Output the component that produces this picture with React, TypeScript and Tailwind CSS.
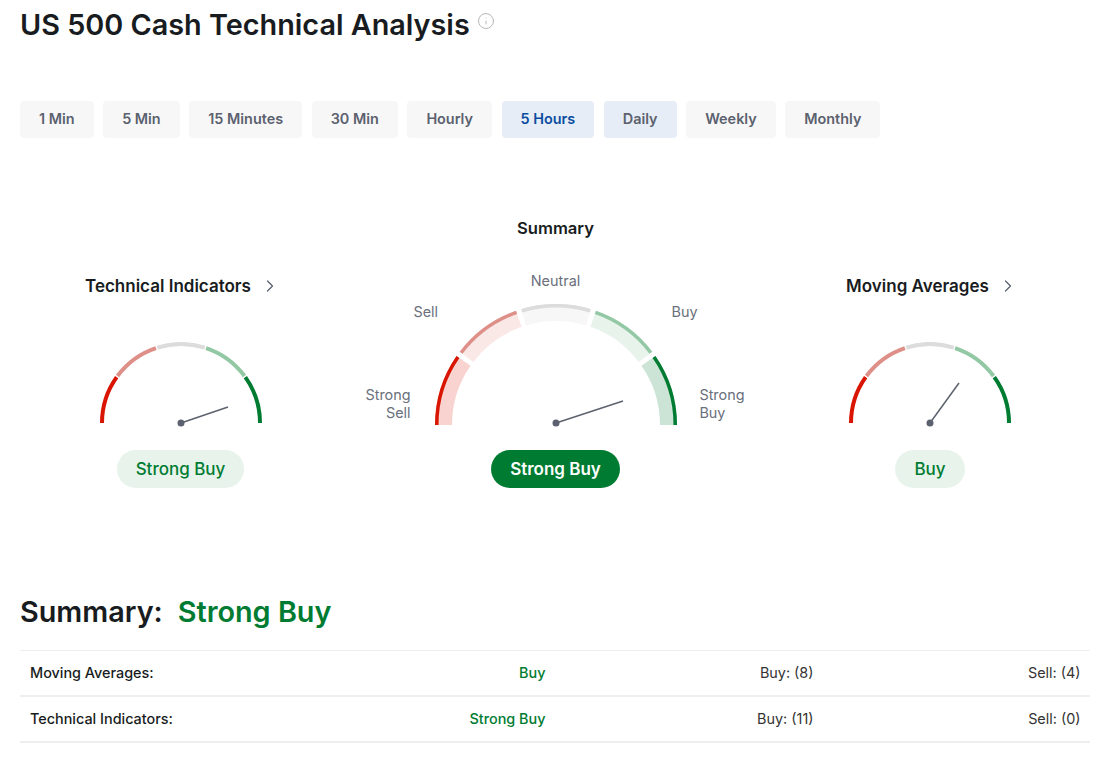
import { ChevronRight, Info } from 'lucide-react'

const tabs = ['1 Min', '5 Min', '15 Minutes', '30 Min', 'Hourly', '5 Hours', 'Daily', 'Weekly', 'Monthly']

const segments = [
  { line: '#d91400', band: '#f9d3cf' },
  { line: '#dd8f88', band: '#f9e8e6' },
  { line: '#dcdcdc', band: '#f7f7f7' },
  { line: '#93c8a4', band: '#e8f3ec' },
  { line: '#007c32', band: '#cce4d5' },
]

const polar = (cx: number, cy: number, r: number, deg: number) => {
  const a = (deg * Math.PI) / 180
  return `${(cx - r * Math.cos(a)).toFixed(2)} ${(cy - r * Math.sin(a)).toFixed(2)}`
}

const arc = (cx: number, cy: number, r: number, from: number, to: number) =>
  `M${polar(cx, cy, r, from)} A${r} ${r} 0 0 1 ${polar(cx, cy, r, to)}`

type GaugeProps = {
  radius: number
  lineWidth: number
  bandWidth?: number
  gap: number
  needle: [number, number]
  // the big gauge has its needle hub sitting a little above the arc's base
  hubLift?: number
}

const Gauge = ({ radius, lineWidth, bandWidth = 0, gap, needle, hubLift = 0 }: GaugeProps) => {
  const size = radius * 2
  const cx = radius
  const cy = radius
  const hubY = cy - hubLift
  return (
    <svg width={size} height={radius + 4} viewBox={`0 0 ${size} ${radius + 4}`} className="block">
      {segments.map((seg, i) => {
        const start = i * 36 + (i === 0 ? 0 : gap)
        const end = (i + 1) * 36 - (i === 4 ? 0 : gap)
        return (
          <g key={seg.line} fill="none">
            {bandWidth > 0 && (
              <path d={arc(cx, cy, radius - bandWidth / 2, start, end)} stroke={seg.band} strokeWidth={bandWidth} />
            )}
            <path d={arc(cx, cy, radius - lineWidth / 2, start, end)} stroke={seg.line} strokeWidth={lineWidth} />
          </g>
        )
      })}
      <line x1={cx} y1={hubY} x2={cx + needle[0]} y2={hubY + needle[1]} stroke="#5b616e" strokeWidth={1.5} />
      <circle cx={cx} cy={hubY} r={3.5} fill="#5b616e" />
    </svg>
  )
}

const SideGauge = ({ title, result, needle }: { title: string; result: string; needle: [number, number] }) => (
  <div className="flex flex-col items-center pt-[58px]">
    <div className="flex h-6 items-center gap-[9px] text-[17px] leading-6 font-semibold text-[#181c21]">
      {title}
      <ChevronRight size={20} strokeWidth={1.5} className="-mr-[4px] text-[#5b616e]" />
    </div>
    <div className="mt-[44px]">
      <Gauge radius={81} lineWidth={4} gap={0.5} needle={needle} />
    </div>
    <div className="mt-[23px] flex h-[38px] items-center rounded-full bg-[#e8f3ec] px-[19px] pt-[2px] text-[17px] font-medium text-[#007c32]">
      {result}
    </div>
  </div>
)

const GaugeLabel = ({ className, children }: { className: string; children: React.ReactNode }) => (
  <div className={`absolute text-[14.4px] leading-[18px] text-[#6a707c] ${className}`}>{children}</div>
)

const rows = [
  { name: 'Moving Averages:', result: 'Buy', buy: 'Buy: (8)', sell: 'Sell: (4)' },
  { name: 'Technical Indicators:', result: 'Strong Buy', buy: 'Buy: (11)', sell: 'Sell: (0)' },
]

export default function App() {
  return (
    <div className="min-h-[759px] bg-white pr-[10px] pl-5 font-['Inter',sans-serif] text-[#181c21]">
      <div className="flex h-[50px] items-center">
        <h1 className="text-[28.8px] leading-[50px] font-semibold">US 500 Cash Technical Analysis</h1>
        <Info size={18} strokeWidth={1.1} className="mb-[8px] ml-[7px] text-[#a7a9ae]" />
      </div>

      <div className="mt-[51px] flex gap-[9.6px]">
        {tabs.map((tab) => (
          <button
            key={tab}
            className={`h-[37px] rounded-[4px] px-[19px] pb-[2px] text-[14.4px] font-semibold ${
              tab === '5 Hours'
                ? 'bg-[#e7edf6] text-[#0a4da0]'
                : tab === 'Daily'
                  ? 'bg-[#e7edf6] text-[#5b616e]'
                  : 'bg-[#f7f7f8] text-[#5b616e]'
            }`}
          >
            {tab}
          </button>
        ))}
      </div>

      <div className="mt-[78px] grid grid-cols-[321px_1fr_320px]">
        <SideGauge title="Technical Indicators" result="Strong Buy" needle={[47, -16]} />

        <div className="flex flex-col items-center">
          <div className="h-6 text-[16.6px] leading-6 font-semibold text-[#181c21]">Summary</div>
          <div className="relative mt-[64px]">
            <Gauge radius={121} lineWidth={3.5} bandWidth={17} gap={1.3} needle={[67, -22]} hubLift={2} />
            <GaugeLabel className="top-[-32px] left-1/2 -translate-x-1/2">Neutral</GaugeLabel>
            <GaugeLabel className="top-[-1px] left-[-21px]">Sell</GaugeLabel>
            <GaugeLabel className="top-[-1px] right-[-21px]">Buy</GaugeLabel>
            <GaugeLabel className="top-[82px] left-[-69px] text-right">
              Strong
              <br />
              Sell
            </GaugeLabel>
            <GaugeLabel className="top-[82px] right-[-68px]">
              Strong
              <br />
              Buy
            </GaugeLabel>
          </div>
          <div className="mt-[21px] flex h-[38px] items-center rounded-full bg-[#007c32] px-[19px] pt-[2px] text-[17px] font-semibold text-white">
            Strong Buy
          </div>
        </div>

        <SideGauge title="Moving Averages" result="Buy" needle={[29, -40]} />
      </div>

      <div className="mt-[105px] flex h-[38px] items-center gap-[15px] text-[28.8px] leading-[38px] font-semibold">
        <span>Summary:</span>
        <span className="text-[#007c32]">Strong Buy</span>
      </div>

      <div className="mt-[19px] border-t border-[#eeeeee]">
        {rows.map((row) => (
          <div
            key={row.name}
            className="grid h-[46px] grid-cols-[260.5px_255px_268px_267px] items-center border-b-2 border-[#eeeeee] pl-[10px] text-[14.4px]"
          >
            <div className="font-medium text-[#181c21]">{row.name}</div>
            <div className="text-right font-medium text-[#007c32]">{row.result}</div>
            <div className="text-right text-[#333333]">{row.buy}</div>
            <div className="text-right text-[#333333]">{row.sell}</div>
          </div>
        ))}
      </div>
    </div>
  )
}
